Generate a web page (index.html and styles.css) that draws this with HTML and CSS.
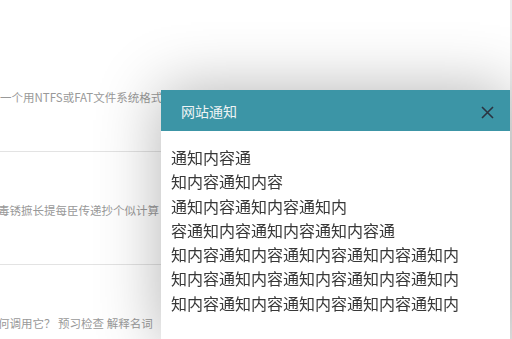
FILE: index.html
```html
<!DOCTYPE html>
<html>
<head lang="zh">
    <meta charset="UTF-8">
    <title>网站通知</title>
    <link rel="stylesheet" href="styles.css">
</head>
<body>
<div id="page">
    <ul id="list">
        <li>一个用NTFS或FAT文件系统格式</li>
        <li class="cut">毒锈摭长提每臣传递抄个似计算</li>
        <li class="cut">何调用它？ 预习检查 解释名词</li>
    </ul>
</div>
<div id="notice">
    <div class="notice-head">
        <span class="notice-title">网站通知</span>
        <span id="close">
            <svg width="13" height="13" viewBox="0 0 13 13"><path d="M1 1L12 12M12 1L1 12" stroke="#2b3340" stroke-width="1.6" fill="none"/></svg>
        </span>
    </div>
    <div class="notice-body">
        通知内容通<br>
        知内容通知内容<br>
        通知内容通知内容通知内<br>
        容通知内容通知内容通知内容通<br>
        知内容通知内容通知内容通知内容通知内<br>
        知内容通知内容通知内容通知内容通知内<br>
        知内容通知内容通知内容通知内容通知内
    </div>
</div>
<script>
    var oClose=document.getElementById("close");
    var oNotice=document.getElementById("notice");
    oClose.onclick=function(){
        oNotice.style.display="none";
    };
</script>
</body>
</html>
```

FILE: styles.css
```css
*{
padding:0;
margin:0;
}
ul{
    list-style:none;
}
body{
    font-family: "Noto Sans CJK SC", "Liberation Sans", sans-serif;
    background: #fff;
}
#page{
    height: 100vh;
    box-sizing: border-box;
    padding-top: 39px;
    border-right: 2px solid #ececec;
    overflow: hidden;
}
#list li{
    padding: 51px 0 47px;
    line-height: 14px;
    font-size: 11.5px;
    color: #999;
    white-space: nowrap;
    border-bottom: 1px solid #e3e3e3;
}
#list li.cut{
    text-indent: -2px;
}
#notice{
    position: fixed;
    left: 161px;
    top: 90px;
    width: 349px;
    background: #fff;
    box-shadow: 0 0 60px rgba(0,0,0,.3);
}
    .notice-head{
        height: 41px;
        background: #3c95a6;
        display: flex;
        align-items: center;
        justify-content: space-between;
        padding: 0 16px 0 20px;
    }
    .notice-title{
        font-size: 14px;
        color: #eef3f4;
        padding-top: 1px;
    }
    #close{
        display: flex;
        cursor: pointer;
        padding-top: 3px;
    }
    .notice-body{
        padding: 14px 10px 30px;
        font-size: 16px;
        line-height: 24.3px;
        color: #383838;
    }
```
